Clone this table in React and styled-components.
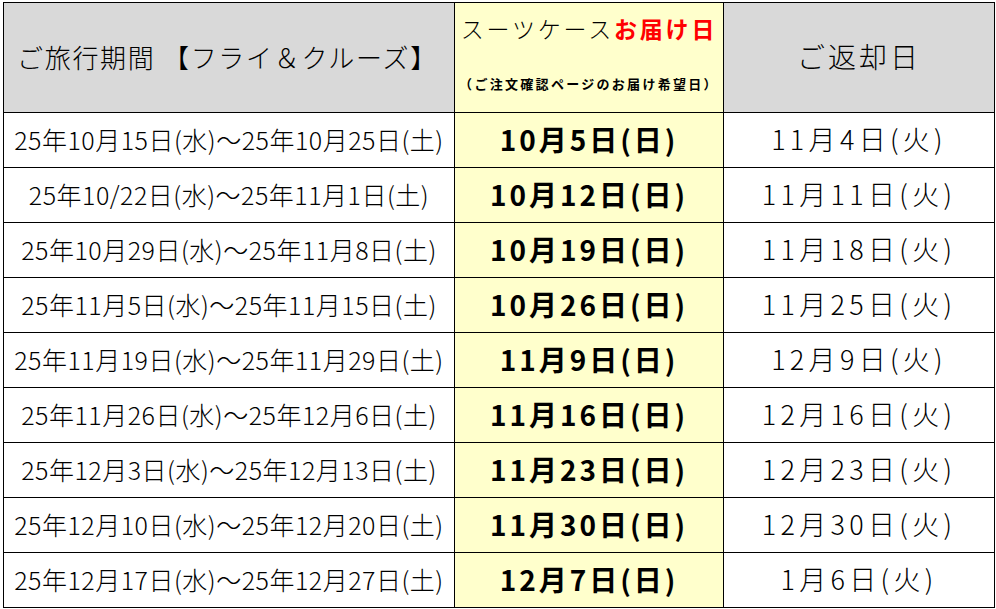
import React from 'react'
import styled, { createGlobalStyle } from 'styled-components';

const GlobalStyle = createGlobalStyle`
    html, body {
        margin: 0;
        padding: 0;
        background: #fff;
    }
    body {
        font-family: 'Noto Sans CJK JP', 'Noto Sans', sans-serif;
        color: #000;
    }
`;

const Page = styled.div`
    padding: 2px 0 0 3px;
`;

const Table = styled.table`
    border-collapse: collapse;
    table-layout: fixed;
    width: 991px;

    td, th {
        border: 1.5px solid #000;
        padding: 0 0 3px;
        box-sizing: border-box;
    }
`;

const HeadCell = styled.th`
    height: 110px;
    background: ${props => props.$yellow ? '#ffffcc' : '#d9d9d9'};
    text-align: ${props => props.$left ? 'left' : 'center'};
    padding-left: ${props => props.$left ? '13px' : '0'} !important;
    font-size: ${props => props.$size || 26}px;
    font-weight: 300;
    letter-spacing: ${props => props.$spacing || 0}px;
    vertical-align: middle;
    white-space: nowrap;
`;

const DeliveryHead = styled.div`
    display: flex;
    flex-direction: column;
    align-items: center;
    gap: 37px;
    padding-bottom: 5px;
`;

const MainLine = styled.div`
    font-size: 23px;
    letter-spacing: 2.8px;
    line-height: 1;

    strong {
        color: #ff0000;
        font-weight: bold;
    }
`;

const SubLine = styled.div`
    font-size: 13px;
    font-weight: bold;
    letter-spacing: 2.3px;
    line-height: 1;
`;

const Cell = styled.td`
    height: 55px;
    text-align: center;
    vertical-align: middle;
    white-space: nowrap;
    background: ${props => props.$yellow ? '#ffffcc' : '#fff'};
    font-size: ${props => props.$size}px;
    font-weight: ${props => props.$bold ? 'bold' : 300};
    letter-spacing: ${props => props.$spacing || 0}px;
`;

const rows = [
    ['25年10月15日(水)〜25年10月25日(土)', '10月5日(日)', '11月4日(火)'],
    ['25年10/22日(水)〜25年11月1日(土)', '10月12日(日)', '11月11日(火)'],
    ['25年10月29日(水)〜25年11月8日(土)', '10月19日(日)', '11月18日(火)'],
    ['25年11月5日(水)〜25年11月15日(土)', '10月26日(日)', '11月25日(火)'],
    ['25年11月19日(水)〜25年11月29日(土)', '11月9日(日)', '12月9日(火)'],
    ['25年11月26日(水)〜25年12月6日(土)', '11月16日(日)', '12月16日(火)'],
    ['25年12月3日(水)〜25年12月13日(土)', '11月23日(日)', '12月23日(火)'],
    ['25年12月10日(水)〜25年12月20日(土)', '11月30日(日)', '12月30日(火)'],
    ['25年12月17日(水)〜25年12月27日(土)', '12月7日(日)', '1月6日(火)'],
];

const App = () => {
    return <Page>
        <GlobalStyle />
        <Table>
            <colgroup>
                <col style={{ width: 451 }} />
                <col style={{ width: 269 }} />
                <col style={{ width: 271 }} />
            </colgroup>
            <thead>
                <tr>
                    <HeadCell $left $size={26} $spacing={1.7}>ご旅行期間 【フライ＆クルーズ】</HeadCell>
                    <HeadCell $yellow>
                        <DeliveryHead>
                            <MainLine>スーツケース<strong>お届け日</strong></MainLine>
                            <SubLine>（ご注文確認ページのお届け希望日）</SubLine>
                        </DeliveryHead>
                    </HeadCell>
                    <HeadCell $size={28} $spacing={3}>ご返却日</HeadCell>
                </tr>
            </thead>
            <tbody>
                {rows.map(([period, delivery, back]) => (
                    <tr key={period}>
                        <Cell $size={25} $spacing={0.5}>{period}</Cell>
                        <Cell $yellow $bold $size={28} $spacing={3}>{delivery}</Cell>
                        <Cell $size={27} $spacing={4.3}>{back}</Cell>
                    </tr>
                ))}
            </tbody>
        </Table>
    </Page>
}

export default App
